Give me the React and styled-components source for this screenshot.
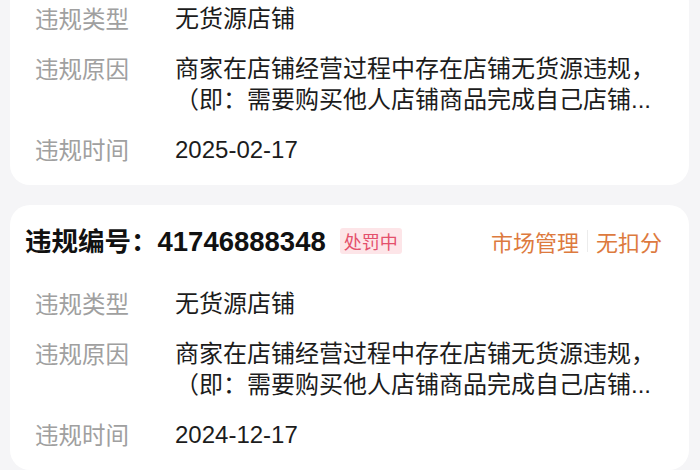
import React from 'react';
import styled, { createGlobalStyle } from 'styled-components';

const GlobalStyle = createGlobalStyle`
  html, body {
    margin: 0;
    padding: 0;
    background: #f5f5f7;
    font-family: "Liberation Sans", "Noto Sans CJK SC", sans-serif;
    overflow: hidden;
  }
`;

const records = [
  {
    id: null,
    type: '无货源店铺',
    reason: ['商家在店铺经营过程中存在店铺无货源违规，', '（即：需要购买他人店铺商品完成自己店铺...'],
    date: '2025-02-17',
  },
  {
    id: '41746888348',
    status: '处罚中',
    source: '市场管理',
    score: '无扣分',
    type: '无货源店铺',
    reason: ['商家在店铺经营过程中存在店铺无货源违规，', '（即：需要购买他人店铺商品完成自己店铺...'],
    date: '2024-12-17',
  },
];

const App = () => {
  return (
    <>
      <GlobalStyle />
      <List>
        {records.map((r, i) => (
          <Card key={i}>
            {r.id && (
              <Header>
                <Title>
                  违规编号：<Num>{r.id}</Num>
                </Title>
                <Badge>{r.status}</Badge>
                <Meta>
                  <span>{r.source}</span>
                  <Divider />
                  <span>{r.score}</span>
                </Meta>
              </Header>
            )}
            <Rows>
              <Row>
                <Label>违规类型</Label>
                <Value>{r.type}</Value>
              </Row>
              <Row>
                <Label>违规原因</Label>
                <Value>
                  {r.reason.map((line, j) => (
                    <Line key={j}>{line}</Line>
                  ))}
                </Value>
              </Row>
              <Row>
                <Label>违规时间</Label>
                <Value>{r.date}</Value>
              </Row>
            </Rows>
          </Card>
        ))}
      </List>
    </>
  );
};

export default App;

const List = styled.div`
  display: flex;
  flex-direction: column;
  gap: 20px;
  padding: 0 11px 0 10px;
  margin-top: -18px;
`;

const Card = styled.div`
  background: #fff;
  border-radius: 20px;
  padding: 21px 27px 20px 15px;
`;

const Header = styled.div`
  display: flex;
  align-items: center;
  height: 30px;
  margin-bottom: 32px;
`;

const Title = styled.div`
  font-family: "Noto Sans CJK SC", sans-serif;
  font-size: 26.5px;
  font-weight: 700;
  color: #111;
  line-height: 30px;
`;

const Num = styled.span`
  font-family: "Liberation Sans", sans-serif;
  font-size: 27.5px;
  font-weight: 700;
`;

const Badge = styled.span`
  margin-left: 14px;
  padding: 0 4px;
  background: #fde5e8;
  color: #e4506c;
  font-family: "Noto Sans CJK SC", sans-serif;
  font-size: 18px;
  line-height: 26px;
  border-radius: 3px;
`;

const Meta = styled.div`
  margin-left: auto;
  display: flex;
  align-items: center;
  gap: 8px;
  color: #dd7a3e;
  font-family: "Noto Sans CJK SC", sans-serif;
  font-size: 22px;
  line-height: 30px;
`;

const Divider = styled.i`
  width: 1px;
  height: 22px;
  background: #ececec;
`;

const Rows = styled.div`
  display: flex;
  flex-direction: column;
  gap: 19px;
`;

const Row = styled.div`
  display: flex;
  align-items: flex-start;
  line-height: 31px;
`;

const Label = styled.div`
  width: 150px;
  flex-shrink: 0;
  padding-left: 10px;
  box-sizing: border-box;
  color: #a0a0a0;
  font-family: "Noto Sans CJK SC", sans-serif;
  font-size: 23.5px;
`;

const Value = styled.div`
  color: #1c1c1c;
  font-size: 24px;
  display: flex;
  flex-direction: column;
`;

const Line = styled.span`
  white-space: nowrap;
`;
